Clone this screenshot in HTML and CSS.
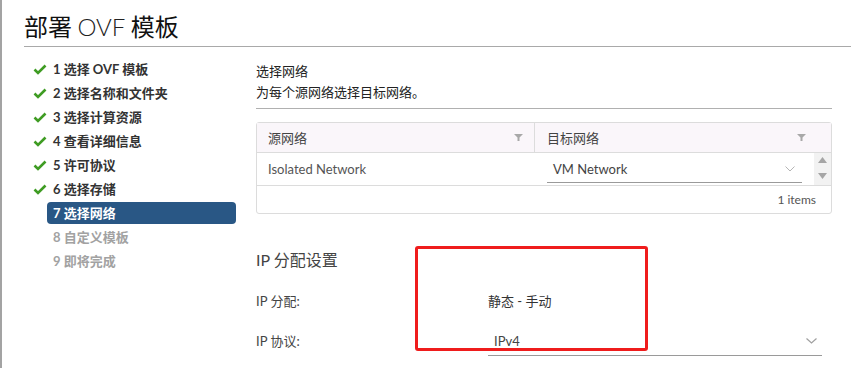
FILE: index.html
```html
<!DOCTYPE html>
<html lang="zh-CN">
<head>
<meta charset="UTF-8">
<title>部署 OVF 模板</title>
<link rel="stylesheet" href="styles.css">
</head>
<body>
<div class="wizard">
  <h1 class="wizard-title">部署 <span class="latin">OVF</span> 模板</h1>
  <div class="wizard-body">
    <ol class="steps">
      <li class="step done"><svg class="check" width="14" height="11" viewBox="0 0 14 11"><path d="M1.5 5.5 L5 9 L12.5 1.5" fill="none" stroke="#3f9c23" stroke-width="2.6"/></svg><span class="label">1 选择 OVF 模板</span></li>
      <li class="step done"><svg class="check" width="14" height="11" viewBox="0 0 14 11"><path d="M1.5 5.5 L5 9 L12.5 1.5" fill="none" stroke="#3f9c23" stroke-width="2.6"/></svg><span class="label">2 选择名称和文件夹</span></li>
      <li class="step done"><svg class="check" width="14" height="11" viewBox="0 0 14 11"><path d="M1.5 5.5 L5 9 L12.5 1.5" fill="none" stroke="#3f9c23" stroke-width="2.6"/></svg><span class="label">3 选择计算资源</span></li>
      <li class="step done"><svg class="check" width="14" height="11" viewBox="0 0 14 11"><path d="M1.5 5.5 L5 9 L12.5 1.5" fill="none" stroke="#3f9c23" stroke-width="2.6"/></svg><span class="label">4 查看详细信息</span></li>
      <li class="step done"><svg class="check" width="14" height="11" viewBox="0 0 14 11"><path d="M1.5 5.5 L5 9 L12.5 1.5" fill="none" stroke="#3f9c23" stroke-width="2.6"/></svg><span class="label">5 许可协议</span></li>
      <li class="step done"><svg class="check" width="14" height="11" viewBox="0 0 14 11"><path d="M1.5 5.5 L5 9 L12.5 1.5" fill="none" stroke="#3f9c23" stroke-width="2.6"/></svg><span class="label">6 选择存储</span></li>
      <li class="step active"><span class="check"></span><span class="label">7 选择网络</span></li>
      <li class="step todo"><span class="check"></span><span class="label">8 自定义模板</span></li>
      <li class="step todo"><span class="check"></span><span class="label">9 即将完成</span></li>
    </ol>

    <div class="content">
      <div class="page-head">
        <div>选择网络</div>
        <div>为每个源网络选择目标网络。</div>
      </div>

      <div class="grid">
        <div class="grid-head">
          <div class="col col-src">源网络<svg class="filter" width="9" height="7" viewBox="0 0 9 7"><polygon points="0,0 9,0 5.5,3.5 5.5,7 3.5,7 3.5,3.5" fill="#a8a8a8"/></svg></div>
          <div class="col col-dst">目标网络<svg class="filter" width="9" height="7" viewBox="0 0 9 7"><polygon points="0,0 9,0 5.5,3.5 5.5,7 3.5,7 3.5,3.5" fill="#a8a8a8"/></svg></div>
        </div>
        <div class="grid-row">
          <div class="col col-src">Isolated Network</div>
          <div class="col col-dst">
            <div class="select small">VM Network<svg class="chev" width="10" height="6" viewBox="0 0 10 6"><path d="M0.5 0.5 L5 5 L9.5 0.5" fill="none" stroke="#b5b5b5" stroke-width="1"/></svg></div>
          </div>
          <div class="scroll">
            <svg width="9" height="6" viewBox="0 0 9 6"><polygon points="0,6 4.5,0 9,6" fill="#a5a5a5"/></svg>
            <svg width="9" height="6" viewBox="0 0 9 6"><polygon points="0,0 9,0 4.5,6" fill="#a5a5a5"/></svg>
          </div>
        </div>
        <div class="grid-foot">1 items</div>
      </div>

      <h2 class="section-title">IP 分配设置</h2>
      <div class="form-row">
        <div class="form-label">IP 分配:</div>
        <div class="form-value">静态 - 手动</div>
      </div>
      <div class="form-row">
        <div class="form-label">IP 协议:</div>
        <div class="select wide">IPv4<svg class="chev" width="11" height="6" viewBox="0 0 11 6"><path d="M0.5 0.5 L5.5 5 L10.5 0.5" fill="none" stroke="#a0a0a0" stroke-width="1.2"/></svg></div>
      </div>
    </div>
  </div>

  <div class="mark"></div>
</div>
</body>
</html>
```

FILE: styles.css
```css
body {
  margin: 0;
  font-family: "Lato", "Noto Sans CJK SC", sans-serif;
  color: #333;
  background: #fff;
}
.wizard {
  position: relative;
  height: 368px;
  border-left: 2px solid #a3a3a3;
  overflow: hidden;
}
.wizard-title {
  margin: 0 0 0 22px;
  padding-top: 10px;
  height: 36px;
  line-height: 32px;
  font-size: 24px;
  font-weight: 400;
  color: #111;
  font-family: "Noto Sans CJK SC", sans-serif;
  border-bottom: 1px solid #a9a9a9;
}
.wizard-title .latin {
  font-family: "Lato", sans-serif;
  font-weight: 300;
  color: #222;
}
.wizard-body {
  display: flex;
}

/* steps */
.steps {
  list-style: none;
  margin: 0;
  padding: 10px 0 0 31px;
  width: 203px;
  flex-shrink: 0;
}
.step {
  display: flex;
  align-items: center;
  height: 24px;
  font-size: 13px;
  font-weight: 700;
}
.step .check {
  width: 14px;
  flex-shrink: 0;
}
.step .label {
  flex: 1;
  line-height: 22px;
  padding-left: 6px;
  border-radius: 4px;
}
.step.done .label { color: #333; }
.step.active .label {
  background: #295785;
  color: #fff;
}
.step.todo .label { color: #a2a2a2; }

/* content */
.content {
  margin-left: 20px;
  width: 576px;
  font-size: 13px;
}
.page-head {
  margin-top: 14px;
  line-height: 21px;
  padding-bottom: 5px;
  border-bottom: 1px solid #b0b0b0;
  color: #222;
}
.grid {
  margin-top: 13px;
  width: 574px;
  border: 1px solid #dcdcdc;
  border-radius: 3px;
  color: #555;
}
.grid-head {
  display: flex;
  height: 29px;
  background: #faf6fa;
  border-bottom: 1px solid #dcdcdc;
  color: #444;
}
.grid-head .col {
  display: flex;
  align-items: center;
  justify-content: space-between;
  padding: 0 11px 0 11px;
}
.grid-head .col-src {
  width: 255px;
  border-right: 1px solid #dcdcdc;
}
.grid-head .col-dst {
  flex: 1;
  padding-left: 12px;
  padding-right: 25px;
}
.grid-row {
  display: flex;
  height: 32px;
  border-bottom: 1px solid #dcdcdc;
}
.grid-row .col {
  display: flex;
  align-items: center;
}
.grid-row .col-src {
  width: 267px;
  padding-left: 11px;
}
.grid-row .col-dst {
  flex: 1;
  padding: 0 12px;
}
.scroll {
  width: 17px;
  background: #f2f2f2;
  display: flex;
  flex-direction: column;
  align-items: center;
  justify-content: space-between;
  padding: 4px 0 6px;
  box-sizing: border-box;
}
.grid-foot {
  height: 27px;
  line-height: 27px;
  text-align: right;
  padding-right: 15px;
  font-size: 12px;
}
.select {
  display: flex;
  align-items: center;
  justify-content: space-between;
  border-bottom: 1px solid #9a9a9a;
  color: #444;
}
.select.small {
  flex: 1;
  height: 26px;
  padding: 0 7px 0 6px;
  margin-top: 1px;
}
.select.wide {
  width: 323px;
  height: 28px;
  padding: 2px 5px 0 6px;
  box-sizing: content-box;
}

/* IP section */
.section-title {
  margin: 34px 0 0;
  font-size: 16px;
  font-weight: 400;
  line-height: 24px;
  color: #444;
}
.form-row {
  display: flex;
  align-items: center;
  margin-top: 16px;
  color: #444;
}
.form-row + .form-row {
  margin-top: 11px;
}
.form-label {
  width: 232px;
  line-height: 26px;
}
.form-value {
  line-height: 26px;
  color: #333;
}

/* annotation box */
.mark {
  position: absolute;
  left: 413px;
  top: 246px;
  width: 227px;
  height: 99px;
  border: 3px solid #ef1c1c;
  border-radius: 3px;
}
```
